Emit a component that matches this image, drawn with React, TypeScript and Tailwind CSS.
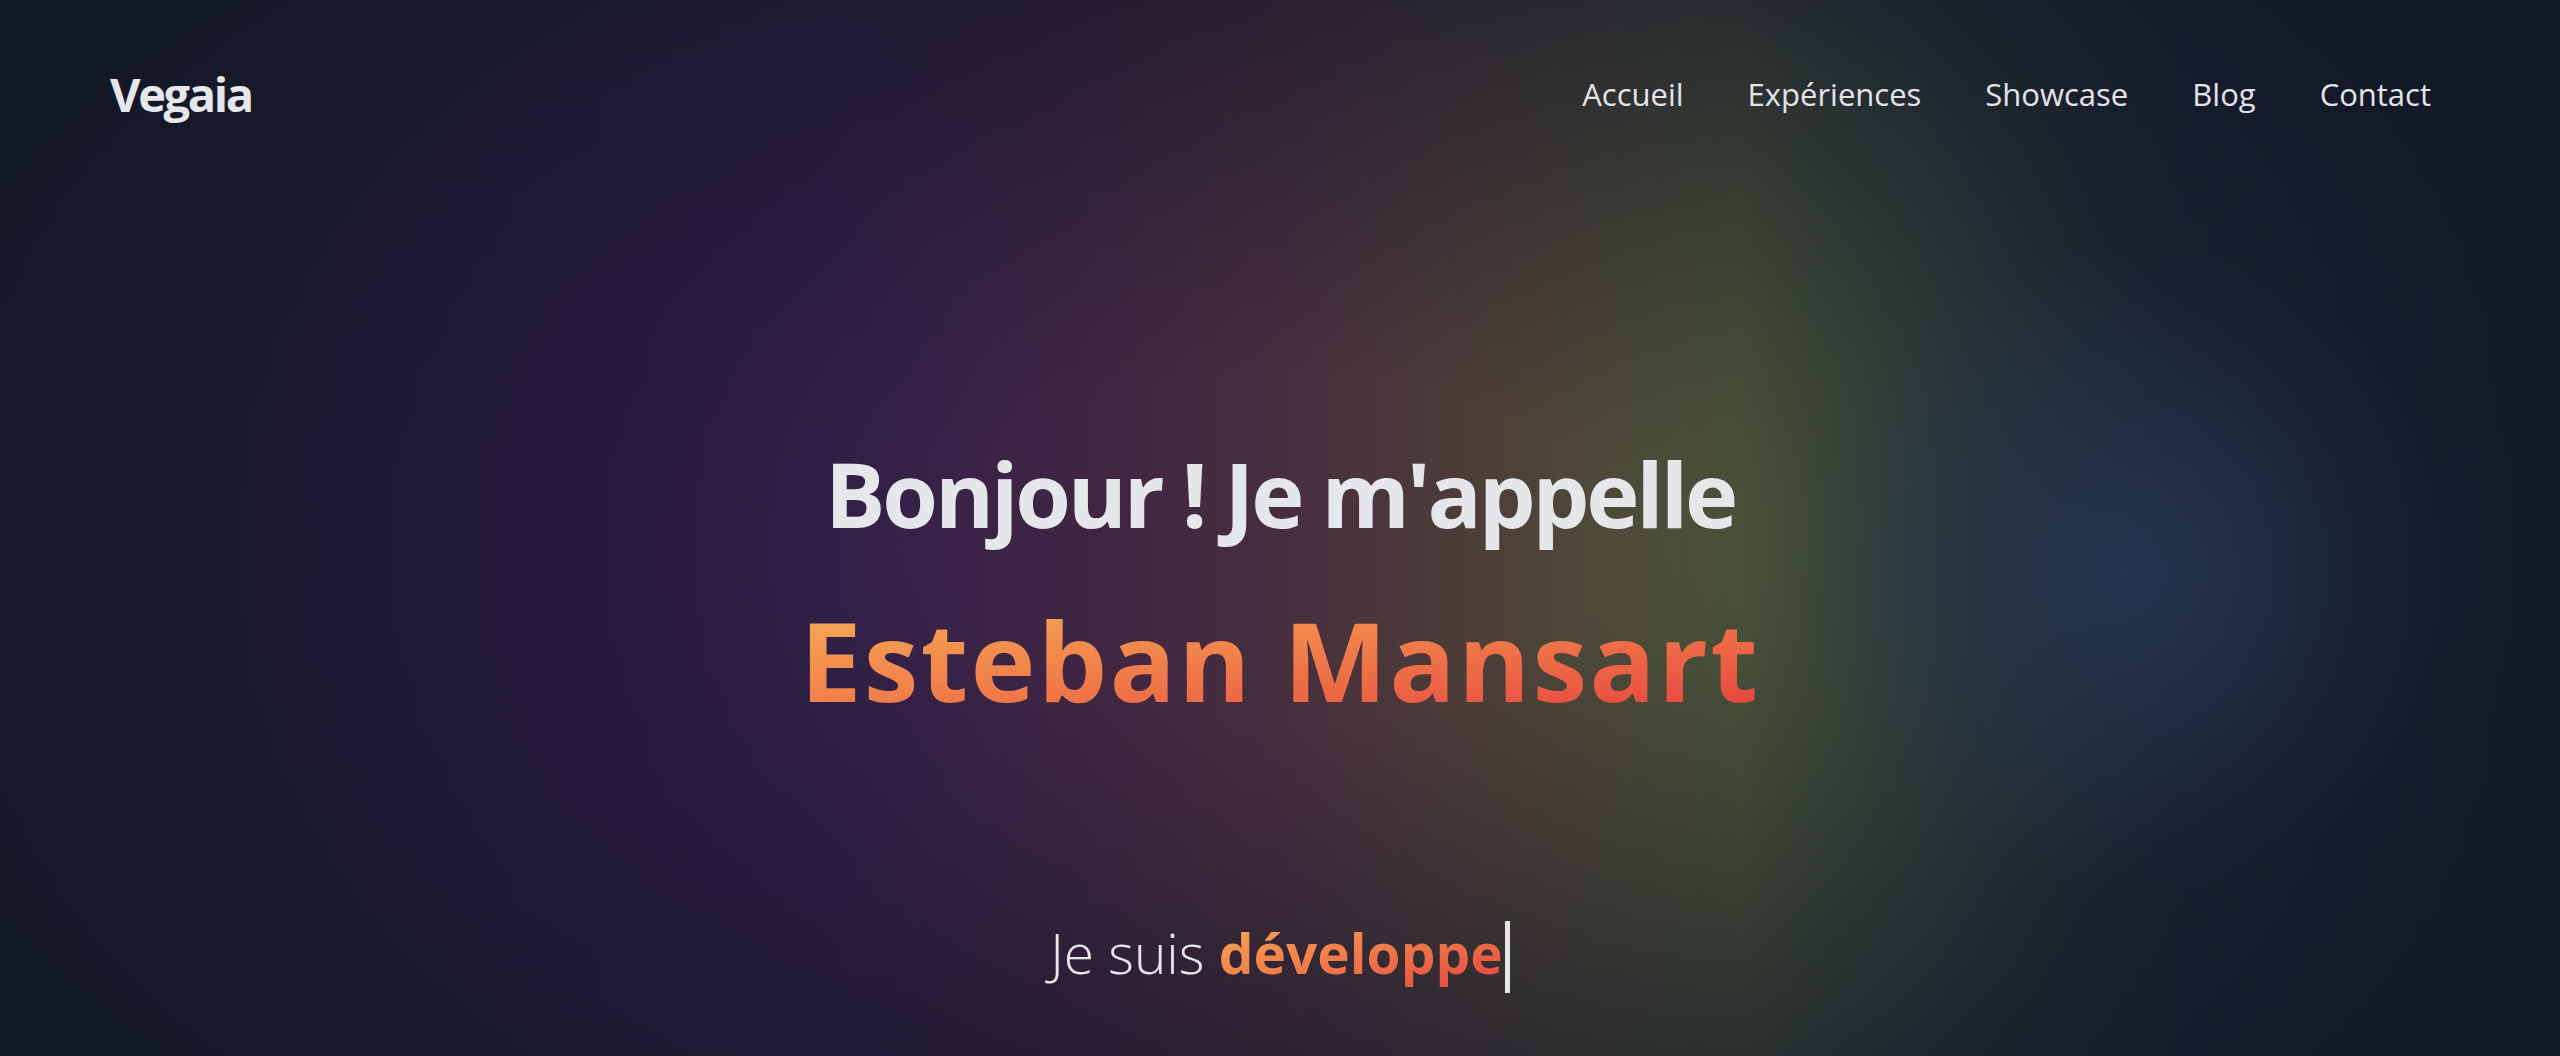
const navLinks = ["Accueil", "Expériences", "Showcase", "Blog", "Contact"];

export default function App() {
  return (
    <div className="min-h-screen w-full bg-[#131827] bg-[radial-gradient(circle_at_83%_54%,rgba(38,54,78,0.95)_0%,rgba(38,54,78,0)_15%),radial-gradient(ellipse_58%_75%_at_50%_52%,rgba(19,24,39,0)_22%,#131827_100%),linear-gradient(90deg,#1b1831_0%,#2e1c46_22%,#34204b_32%,#3f2543_42%,#472e3d_50%,#4d4138_59%,#4f583b_68%,#3c4a3c_75%,#1f2a38_85%,#141a2a_100%)] font-['Open_Sans',sans-serif] text-[#e5e7eb]">
      <header className="flex h-[188px] items-center justify-between pl-[110px] pr-[129px]">
        <a href="#" className="text-[47px] font-bold leading-none tracking-[-0.05em]">
          Vegaia
        </a>
        <nav className="flex items-center gap-[64px]">
          {navLinks.map((link) => (
            <a
              key={link}
              href="#"
              className="text-[31px] leading-none text-[#e2e4ea] transition hover:text-white"
            >
              {link}
            </a>
          ))}
        </nav>
      </header>

      <main className="flex flex-col items-center pb-[62px]">
        <h1 className="mt-[260px] text-[90px] font-bold leading-none tracking-[-0.035em]">
          Bonjour ! Je m'appelle
        </h1>
        <h2 className="mt-[66px] bg-gradient-to-br from-[#f6ad55] to-[#e53e3e] bg-clip-text text-[110px] font-bold leading-none tracking-[0.02em] text-transparent">
          Esteban Mansart
        </h2>
        <p className="mt-[207px] text-[55px] font-light leading-none">
          Je suis{" "}
          <span className="bg-gradient-to-br from-[#f6ad55] to-[#e53e3e] bg-clip-text font-bold text-transparent">
            développe
          </span>
          <span className="ml-[2px] inline-block h-[72px] w-[5px] bg-[#e5e7eb] align-[-19px]" />
        </p>
      </main>
    </div>
  );
}
